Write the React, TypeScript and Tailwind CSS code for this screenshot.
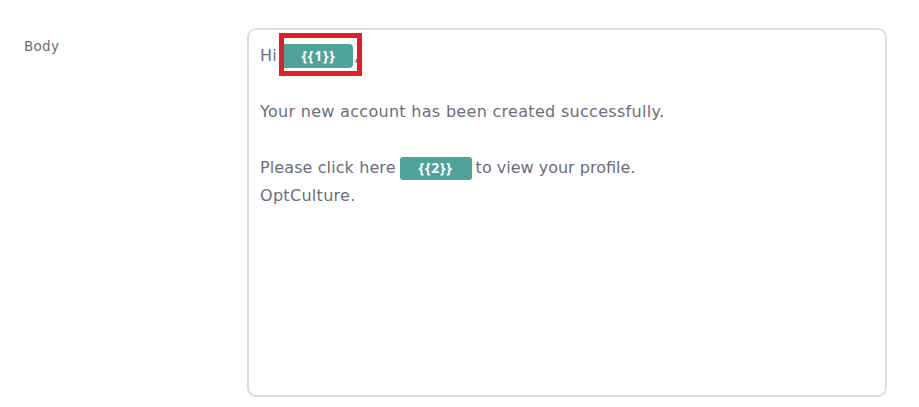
import React from "react";

export default function App() {
  return (
    <div className="w-[919px] h-[407px] bg-white overflow-hidden" style={{ fontFamily: "'DejaVu Sans', 'Noto Sans', sans-serif" }}>
      <div className="flex pt-7">
        <div className="w-[247px] pl-6 pt-[8px] text-[13.5px] tracking-[0.3px] text-[#6c6b7a]">Body</div>
        <div className="w-[640px] h-[369px] border-2 border-[#dedede] rounded-[9px] pl-[11px] pt-[12px] text-[16px] tracking-[0.3px] leading-[28px] text-[#6d6c7a]">
          <div className="flex items-center h-[28px]">
            <span>Hi</span>
            <span className="relative ml-[7px] inline-flex items-center justify-center w-[69px] h-[24px] bg-[#4fa39a] rounded-r-[4px] text-white text-[14px] font-bold tracking-[0.8px]" style={{ fontFamily: "'Open Sans', sans-serif" }}>
              {"{{1}}"}
              <span className="absolute left-[-5px] top-[-11px] w-[83px] h-[43px] border-[5px] border-[#e21f26]"></span>
            </span>
            <span className="ml-[1px]">,</span>
          </div>
          <div className="h-[28px]"></div>
          <div className="h-[28px]">Your new account has been created successfully.</div>
          <div className="h-[28px]"></div>
          <div className="flex items-center h-[28px]">
            <span className="tracking-[0.1px]">Please click here</span>
            <span className="mx-[4px] inline-flex items-center justify-center w-[72px] h-[23px] bg-[#4fa39a] rounded-[3px] text-white text-[14px] font-bold tracking-[0.8px]" style={{ fontFamily: "'Open Sans', sans-serif" }}>{"{{2}}"}</span>
            <span className="tracking-[0px]">to view your profile.</span>
          </div>
          <div className="h-[28px]">OptCulture.</div>
        </div>
      </div>
    </div>
  );
}
